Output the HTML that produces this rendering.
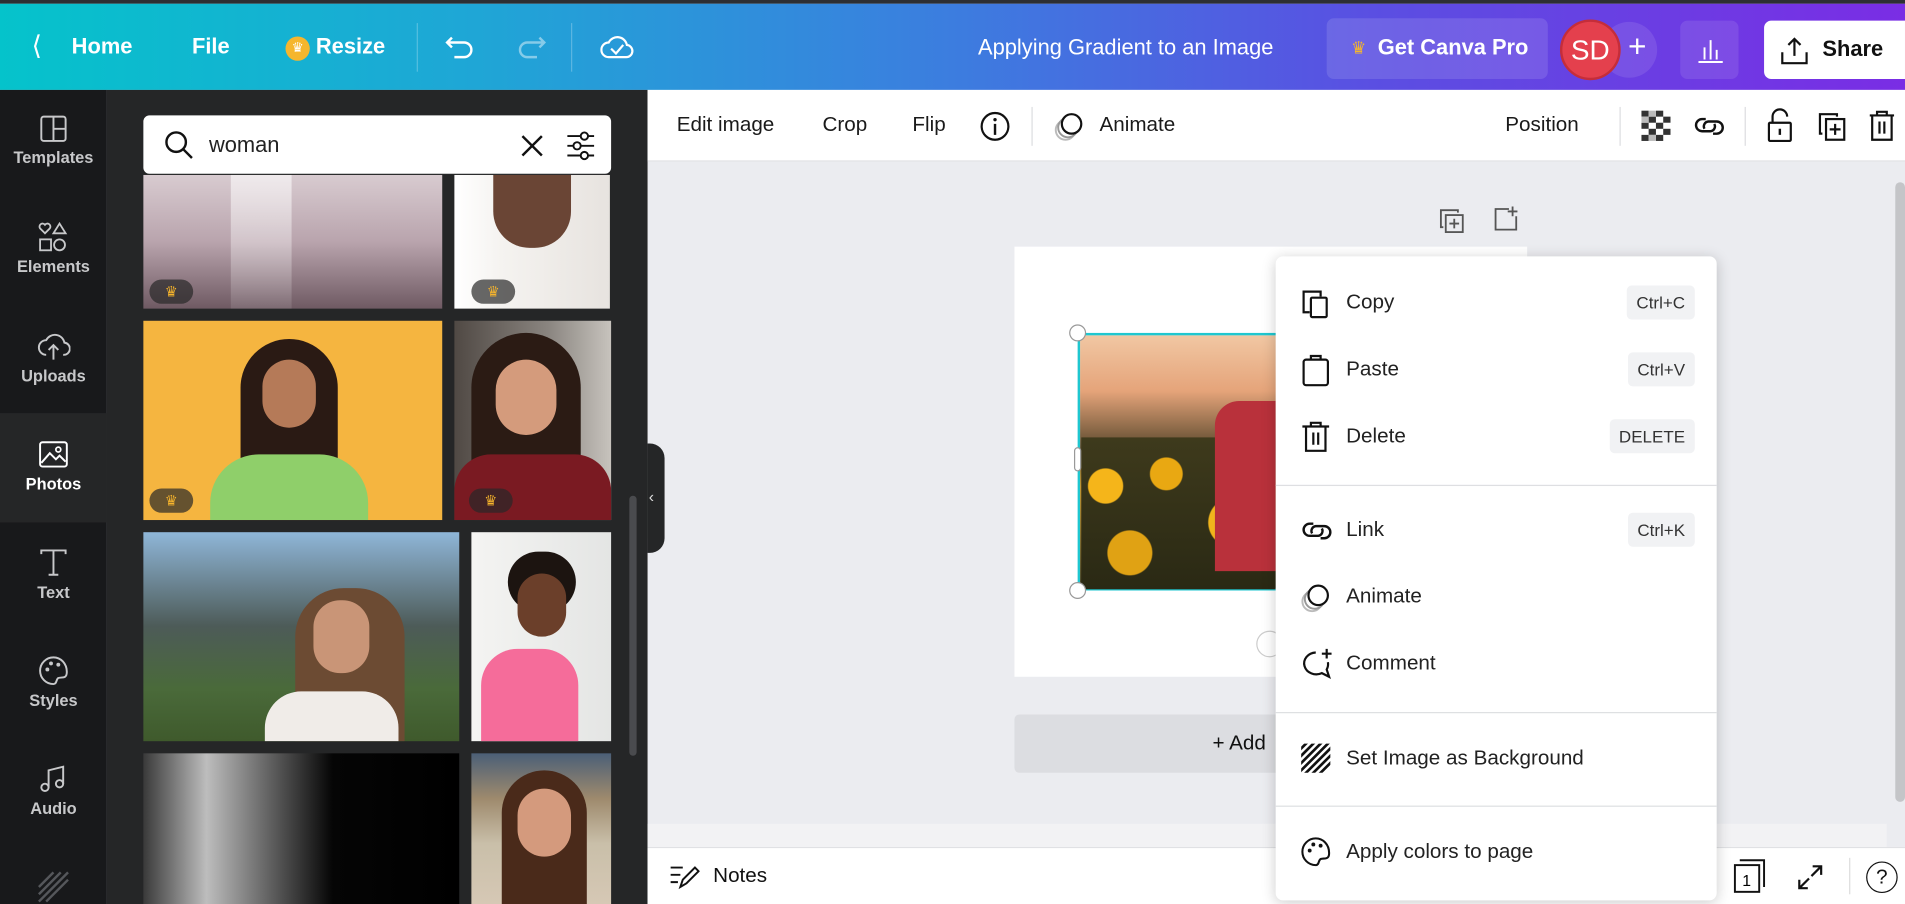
<!DOCTYPE html>
<html><head><meta charset="utf-8"><style>
*{box-sizing:border-box;margin:0;padding:0}
html,body{width:1905px;height:904px;overflow:hidden;background:#ebecf0;font-family:"Liberation Sans",sans-serif}
#r{position:absolute;left:0;top:0;width:1568px;height:744px;transform:scale(1.21492,1.21505);transform-origin:0 0}
.a{position:absolute}
.hd{left:0;top:0;width:1568px;height:74px;background:linear-gradient(90deg,#05c3cb 0%,#1fa6d6 25%,#3c7ddf 50%,#5a4fe2 72%,#7a2de4 100%);border-top:3px solid #2d2f33}
.w{color:#fff;font-size:18px;font-weight:bold}
.side{left:0;top:74px;width:88px;height:670px;background:#18191b}
.panel{left:88px;top:74px;width:445px;height:670px;background:#252627}
.si{position:absolute;left:0;width:88px;text-align:center;color:#c7c8ca;font-size:13.5px;font-weight:bold}
.si svg{display:block;margin:0 auto 4px}
.tb{left:533px;top:74px;width:1035px;height:59px;background:#fff;border-bottom:1px solid #e0e1e4}
.tt{font-size:17px;color:#1a1a1a}
.menu{left:1050px;top:211px;width:363px;height:530px;background:#fff;border-radius:6px;box-shadow:0 2px 12px rgba(0,0,0,.2)}
.mi{position:absolute;left:58px;font-size:17px;color:#222}
.ic{position:absolute;left:20px}
.k{position:absolute;right:18px;height:28px;line-height:28px;padding:0 8px;background:#f1f2f4;border-radius:4px;font-size:14px;color:#333}
.hr{position:absolute;left:0;width:363px;height:1px;background:#dedfe2}
.crown{position:absolute;width:36px;height:20px;border-radius:10px;background:rgba(40,40,40,.7);color:#f7b52c;font-size:12px;text-align:center;line-height:20px}
</style></head><body><div id="r">
<div class="a hd">
 <div class="a w" style="left:26px;top:22px;font-weight:normal;font-size:22px">&#10216;</div>
 <div class="a w" style="left:59px;top:25px">Home</div>
 <div class="a w" style="left:158px;top:25px">File</div>
 <div class="a" style="left:235px;top:27px;width:20px;height:20px;border-radius:50%;background:#f5b62d;color:#fff;font-size:11px;text-align:center;line-height:20px">&#9819;</div>
 <div class="a w" style="left:260px;top:25px">Resize</div>
 <div class="a" style="left:343px;top:16px;width:1px;height:40px;background:rgba(255,255,255,.25)"></div>
 <svg class="a" style="left:366px;top:26px" width="28" height="22" viewBox="0 0 28 22"><path d="M6 2 L2 6 L6 10 M2 6 H16 a6 6 0 0 1 0 12 H8" fill="none" stroke="#fff" stroke-width="2"/></svg>
 <svg class="a" style="left:424px;top:26px" width="28" height="22" viewBox="0 0 28 22"><path d="M20 2 L24 6 L20 10 M24 6 H10 a6 6 0 0 0 0 12 H18" fill="none" stroke="rgba(255,255,255,.45)" stroke-width="2"/></svg>
 <div class="a" style="left:470px;top:16px;width:1px;height:40px;background:rgba(255,255,255,.25)"></div>
 <svg class="a" style="left:494px;top:24px" width="28" height="24" viewBox="0 0 28 24"><path d="M7 20 a6 6 0 0 1 0-12 a8 8 0 0 1 15 2 a5 5 0 0 1-1 10 Z M9 13 l4 4 l6-7" fill="none" stroke="#fff" stroke-width="1.8"/></svg>
 <div class="a w" style="left:805px;top:26px;font-weight:normal;font-size:18px">Applying Gradient to an Image</div>
 <div class="a" style="left:1092px;top:12px;width:182px;height:50px;border-radius:6px;background:rgba(255,255,255,.12)"></div>
 <div class="a" style="left:1112px;top:28px;color:#f5b62d;font-size:14px">&#9819;</div>
 <div class="a w" style="left:1134px;top:26px">Get Canva Pro</div>
 <div class="a" style="left:1318px;top:15px;width:46px;height:46px;border-radius:50%;background:rgba(255,255,255,.1)"></div>
 <div class="a" style="left:1284px;top:13px;width:50px;height:50px;border-radius:50%;background:#e4404d;border:2px solid #c52d3a;color:#fff;font-size:23px;text-align:center;line-height:46px">SD</div>
 <div class="a w" style="left:1340px;top:20px;font-size:26px;font-weight:normal">+</div>
 <div class="a" style="left:1383px;top:14px;width:48px;height:48px;border-radius:6px;background:rgba(255,255,255,.1)"></div>
 <svg class="a" style="left:1396px;top:26px" width="24" height="24" viewBox="0 0 24 24"><path d="M2 22H22 M7 20V10 M12 20V4 M17 20V12" stroke="#fff" stroke-width="1.6"/></svg>
 <div class="a" style="left:1452px;top:14px;width:116px;height:48px;border-radius:6px 0 0 6px;background:#fff"></div>
 <svg class="a" style="left:1464px;top:26px" width="26" height="26" viewBox="0 0 26 26"><path d="M13 3V17 M8 8 L13 3 L18 8 M3 14V23H23V14" fill="none" stroke="#111" stroke-width="1.8"/></svg>
 <div class="a" style="left:1500px;top:27px;font-size:18px;font-weight:bold;color:#111">Share</div>
</div>
<div class="a side">
 <div class="a" style="left:0;top:266px;width:88px;height:90px;background:#252627"></div>
 <div class="si" style="top:20px"><svg width="24" height="24" viewBox="0 0 24 24"><rect x="2" y="2" width="20" height="20" rx="2" fill="none" stroke="#c7c8ca" stroke-width="1.6"/><path d="M12 2V22 M12 12H22" stroke="#c7c8ca" stroke-width="1.6"/></svg>Templates</div>
 <div class="si" style="top:108px"><svg width="26" height="26" viewBox="0 0 26 26"><path d="M6 10 L2 6 a2.5 2.5 0 0 1 4-3 a2.5 2.5 0 0 1 4 3Z M18 2 L23 10 H13Z" fill="none" stroke="#c7c8ca" stroke-width="1.5"/><rect x="2" y="15" width="9" height="9" fill="none" stroke="#c7c8ca" stroke-width="1.5"/><circle cx="18" cy="19.5" r="4.5" fill="none" stroke="#c7c8ca" stroke-width="1.5"/></svg>Elements</div>
 <div class="si" style="top:198px"><svg width="28" height="26" viewBox="0 0 28 26"><path d="M8 20 a6 6 0 0 1 0-12 a8 8 0 0 1 15 2 a5 5 0 0 1-1 10 M14 24V12 M10 16 L14 12 L18 16" fill="none" stroke="#c7c8ca" stroke-width="1.6"/></svg>Uploads</div>
 <div class="si" style="top:287px;color:#fff"><svg width="26" height="26" viewBox="0 0 26 26"><rect x="2" y="3" width="22" height="20" rx="2" fill="none" stroke="#fff" stroke-width="1.6"/><circle cx="17" cy="9" r="2" fill="none" stroke="#fff" stroke-width="1.4"/><path d="M3 20 L10 12 L15 17 L18 14 L23 19" fill="none" stroke="#fff" stroke-width="1.6"/></svg>Photos</div>
 <div class="si" style="top:376px"><svg width="26" height="26" viewBox="0 0 26 26"><path d="M3 6V3H23V6 M13 3V23 M9 23H17" fill="none" stroke="#c7c8ca" stroke-width="1.6"/></svg>Text</div>
 <div class="si" style="top:465px"><svg width="26" height="26" viewBox="0 0 26 26"><path d="M13 2 a11 11 0 1 0 0 22 c3 0 2-4 4-5 c3-1 7 1 7-5 C24 7 19 2 13 2Z" fill="none" stroke="#c7c8ca" stroke-width="1.6"/><circle cx="8" cy="12" r="1.6" fill="#c7c8ca"/><circle cx="11" cy="7" r="1.6" fill="#c7c8ca"/><circle cx="17" cy="8" r="1.6" fill="#c7c8ca"/></svg>Styles</div>
 <div class="si" style="top:554px"><svg width="26" height="26" viewBox="0 0 26 26"><path d="M9 20V6 L21 3V17" fill="none" stroke="#c7c8ca" stroke-width="1.6"/><circle cx="6" cy="20" r="3" fill="none" stroke="#c7c8ca" stroke-width="1.6"/><circle cx="18" cy="17" r="3" fill="none" stroke="#c7c8ca" stroke-width="1.6"/></svg>Audio</div>
 <svg class="a" style="left:30px;top:642px" width="28" height="28" viewBox="0 0 28 28"><path d="M2 14L14 2 M2 20L20 2 M2 26L26 2 M8 26L26 8" stroke="#55575b" stroke-width="2"/></svg>
</div>
<div class="a panel">
 <div class="a" style="left:30px;top:70px;width:246px;height:110px;background:linear-gradient(180deg,#d8cbd0 0%,#b9a4ad 50%,#6f5a63 100%)"></div>
 <div class="a" style="left:102px;top:70px;width:50px;height:110px;background:linear-gradient(180deg,rgba(255,255,255,.6),rgba(255,255,255,.1))"></div>
 <div class="crown" style="left:35px;top:156px">&#9819;</div>
 <div class="a" style="left:286px;top:70px;width:128px;height:110px;background:linear-gradient(90deg,#fff 0%,#f5f3f0 30%,#e7e3df 100%)"></div>
 <div class="a" style="left:318px;top:70px;width:64px;height:60px;background:#6a4535;border-radius:0 0 30px 30px"></div>
 <div class="crown" style="left:300px;top:156px">&#9819;</div>
 <div class="a" style="left:30px;top:190px;width:246px;height:164px;background:#f5b540"></div>
 <div class="a" style="left:110px;top:205px;width:80px;height:110px;border-radius:40px 40px 10px 10px;background:#2a1a14"></div>
 <div class="a" style="left:128px;top:222px;width:44px;height:56px;border-radius:22px;background:#b57a58"></div>
 <div class="a" style="left:85px;top:300px;width:130px;height:54px;border-radius:40px 40px 0 0;background:#8fcf6a"></div>
 <div class="crown" style="left:35px;top:328px">&#9819;</div>
 <div class="a" style="left:286px;top:190px;width:129px;height:164px;background:linear-gradient(90deg,#504944,#8a8580 60%,#c7c3bd)"></div>
 <div class="a" style="left:300px;top:200px;width:90px;height:130px;border-radius:45px 45px 10px 10px;background:#2b1b14"></div>
 <div class="a" style="left:320px;top:222px;width:50px;height:62px;border-radius:25px;background:#d49b7c"></div>
 <div class="a" style="left:286px;top:300px;width:129px;height:54px;background:#7a1a22;border-radius:30px 30px 0 0"></div>
 <div class="crown" style="left:298px;top:328px">&#9819;</div>
 <div class="a" style="left:30px;top:364px;width:260px;height:172px;background:linear-gradient(180deg,#8fb6d8 0%,#4d5b58 45%,#4a6a3a 75%,#3f5a2c 100%)"></div>
 <div class="a" style="left:155px;top:410px;width:90px;height:126px;border-radius:40px 40px 0 0;background:#6c4b33"></div>
 <div class="a" style="left:170px;top:420px;width:46px;height:60px;border-radius:22px;background:#c99577"></div>
 <div class="a" style="left:130px;top:495px;width:110px;height:41px;border-radius:30px 30px 0 0;background:#f0ece8"></div>
 <div class="a" style="left:300px;top:364px;width:115px;height:172px;background:linear-gradient(90deg,#f4f4f2,#e4e5e4)"></div>
 <div class="a" style="left:330px;top:380px;width:56px;height:50px;border-radius:28px;background:#1c1410"></div>
 <div class="a" style="left:338px;top:398px;width:40px;height:52px;border-radius:20px;background:#6b3f2a"></div>
 <div class="a" style="left:308px;top:460px;width:80px;height:76px;border-radius:30px 30px 0 0;background:#f56c9a"></div>
 <div class="a" style="left:30px;top:546px;width:260px;height:124px;background:linear-gradient(90deg,#3a3a3a,#bdbdbd 20%,#4a4a4a 45%,#050505 60%,#000)"></div>
 <div class="a" style="left:300px;top:546px;width:115px;height:124px;background:linear-gradient(180deg,#4b5f77 0%,#9e8a6d 30%,#c9bfa9 60%,#d6c8b5 100%)"></div>
 <div class="a" style="left:325px;top:560px;width:70px;height:110px;border-radius:35px 35px 0 0;background:#4a2a1a"></div>
 <div class="a" style="left:338px;top:575px;width:44px;height:56px;border-radius:22px;background:#d49a7d"></div>
 <div class="a" style="left:30px;top:21px;width:385px;height:48px;background:#fff;border-radius:5px"></div>
 <svg class="a" style="left:46px;top:32px" width="26" height="26" viewBox="0 0 26 26"><circle cx="11" cy="11" r="8" fill="none" stroke="#111" stroke-width="2"/><path d="M17 17 L24 24" stroke="#111" stroke-width="2"/></svg>
 <div class="a" style="left:84px;top:35px;font-size:18px;color:#222">woman</div>
 <svg class="a" style="left:340px;top:36px" width="20" height="20" viewBox="0 0 20 20"><path d="M2 2L18 18M18 2L2 18" stroke="#111" stroke-width="2"/></svg>
 <svg class="a" style="left:377px;top:33px" width="26" height="26" viewBox="0 0 26 26"><path d="M2 5H24M2 13H24M2 21H24" stroke="#111" stroke-width="1.6"/><circle cx="16" cy="5" r="3" fill="#fff" stroke="#111" stroke-width="1.6"/><circle cx="10" cy="13" r="3" fill="#fff" stroke="#111" stroke-width="1.6"/><circle cx="16" cy="21" r="3" fill="#fff" stroke="#111" stroke-width="1.6"/></svg>
 <div class="a" style="left:430px;top:334px;width:6px;height:214px;border-radius:3px;background:#4a4b4e"></div>
</div>
<div class="a" style="left:533px;top:365px;width:14px;height:90px;background:#252627;border-radius:0 12px 12px 0"></div>
<div class="a" style="left:534px;top:401px;color:#ddd;font-size:13px">&#8249;</div>
<div class="a tb">
 <div class="a tt" style="left:24px;top:19px">Edit image</div>
 <div class="a tt" style="left:144px;top:19px">Crop</div>
 <div class="a tt" style="left:218px;top:19px">Flip</div>
 <svg class="a" style="left:272px;top:16px" width="28" height="28" viewBox="0 0 28 28"><circle cx="14" cy="14" r="11" fill="none" stroke="#111" stroke-width="1.8"/><path d="M14 12V21" stroke="#111" stroke-width="2"/><circle cx="14" cy="8.5" r="1.4" fill="#111"/></svg>
 <div class="a" style="left:316px;top:14px;width:1px;height:32px;background:#dcdde0"></div>
 <svg class="a" style="left:334px;top:15px" width="28" height="30" viewBox="0 0 28 30"><circle cx="10" cy="18" r="8" fill="none" stroke="#bbb" stroke-width="1.6"/><circle cx="12" cy="16" r="8" fill="#fff" stroke="#999" stroke-width="1.6"/><circle cx="15" cy="13" r="8" fill="#fff" stroke="#111" stroke-width="1.8"/></svg>
 <div class="a tt" style="left:372px;top:19px">Animate</div>
 <div class="a tt" style="left:706px;top:19px">Position</div>
 <div class="a" style="left:800px;top:14px;width:1px;height:32px;background:#dcdde0"></div>
 <svg class="a" style="left:818px;top:17px" width="24" height="26" viewBox="0 0 24 26"><g fill="#333"><rect x="0" y="0" width="6" height="5"/><rect x="12" y="0" width="6" height="5"/><rect x="6" y="5" width="6" height="5"/><rect x="18" y="5" width="6" height="5"/><rect x="0" y="10" width="6" height="5"/><rect x="12" y="10" width="6" height="5"/><rect x="6" y="15" width="6" height="5"/><rect x="18" y="15" width="6" height="5"/><rect x="0" y="20" width="6" height="5"/><rect x="12" y="20" width="6" height="5"/></g><g fill="#bbb"><rect x="6" y="0" width="6" height="5"/><rect x="0" y="5" width="6" height="5"/><rect x="6" y="20" width="6" height="5"/></g></svg>
 <svg class="a" style="left:860px;top:18px" width="28" height="24" viewBox="0 0 28 24"><path d="M11 6H8a5 5 0 0 0 0 10h7a4 4 0 0 0 3-6 M17 18h3a5 5 0 0 0 0-10h-7a4 4 0 0 0-3 6" fill="none" stroke="#111" stroke-width="2"/></svg>
 <div class="a" style="left:903px;top:14px;width:1px;height:32px;background:#dcdde0"></div>
 <svg class="a" style="left:920px;top:14px" width="24" height="30" viewBox="0 0 24 30"><path d="M6 13V8a6 6 0 0 1 12 0" fill="none" stroke="#111" stroke-width="1.8"/><rect x="3" y="13" width="18" height="15" rx="1" fill="none" stroke="#111" stroke-width="1.8"/><path d="M12 18V23" stroke="#111" stroke-width="2"/></svg>
 <svg class="a" style="left:962px;top:16px" width="26" height="28" viewBox="0 0 26 28"><path d="M5 20H3V4H17V6" fill="none" stroke="#111" stroke-width="1.8"/><rect x="8" y="8" width="15" height="17" fill="none" stroke="#111" stroke-width="1.8"/><path d="M15.5 12V21M11 16.5H20" stroke="#111" stroke-width="1.8"/></svg>
 <svg class="a" style="left:1004px;top:15px" width="24" height="28" viewBox="0 0 24 28"><path d="M2 6H22M8 6V3H16V6M4 6V26H20V6M10 11V21M14 11V21" fill="none" stroke="#111" stroke-width="1.8"/></svg>
</div>
<svg class="a" style="left:1183px;top:170px" width="24" height="24" viewBox="0 0 24 24"><path d="M5 17H3V3H17V5" fill="none" stroke="#555" stroke-width="1.5"/><rect x="7" y="7" width="14" height="14" fill="none" stroke="#555" stroke-width="1.5"/><path d="M14 10V18M10 14H18" stroke="#555" stroke-width="1.5"/></svg>
<svg class="a" style="left:1228px;top:168px" width="24" height="24" viewBox="0 0 24 24"><path d="M14 4H3V21H20V10M17 2V10M13 6H21" fill="none" stroke="#555" stroke-width="1.5"/></svg>
<div class="a" style="left:835px;top:203px;width:422px;height:354px;background:#fff"></div>
<div class="a" style="left:887px;top:274px;width:200px;height:212px;background:linear-gradient(180deg,#f1c7a3 0%,#e5a47a 22%,#5c4a2e 45%,#c98c1c 60%,#3c3318 100%);border:2px solid #1fc7d0"></div>
<div class="a" style="left:890px;top:360px;width:160px;height:125px;background:radial-gradient(circle at 20px 40px,#f5b51a 14px,transparent 15px),radial-gradient(circle at 70px 30px,#e9a812 13px,transparent 14px),radial-gradient(circle at 125px 70px,#f0b41c 20px,transparent 21px),radial-gradient(circle at 40px 95px,#e0a214 18px,transparent 19px),linear-gradient(#3e3a1c,#2a2914)"></div>
<div class="a" style="left:1000px;top:330px;width:50px;height:140px;background:#b9313b;border-radius:20px 0 0 0"></div>
<div class="a" style="left:880px;top:267px;width:14px;height:14px;border-radius:50%;background:#fff;border:1px solid #999"></div>
<div class="a" style="left:880px;top:479px;width:14px;height:14px;border-radius:50%;background:#fff;border:1px solid #999"></div>
<div class="a" style="left:884px;top:368px;width:6px;height:20px;border-radius:3px;background:#fff;border:1px solid #999"></div>
<div class="a" style="left:1034px;top:519px;width:22px;height:22px;border-radius:50%;background:#fff;border:1px solid #ccc"></div>
<div class="a" style="left:835px;top:588px;width:300px;height:48px;background:#dcdde1;border-radius:4px"></div>
<div class="a" style="left:998px;top:602px;font-size:17px;color:#111">+ Add</div>
<div class="a" style="left:533px;top:697px;width:1035px;height:47px;background:#fff;border-top:1px solid #e0e1e4"></div>
<div class="a" style="left:533px;top:678px;width:1020px;height:19px;background:#f2f2f4"></div>
<svg class="a" style="left:550px;top:710px" width="26" height="24" viewBox="0 0 26 24"><path d="M2 4H12M2 10H10M2 16H8M10 20 L12 14 L22 4 L25 7 L15 17Z" fill="none" stroke="#111" stroke-width="1.6"/></svg>
<div class="a" style="left:587px;top:711px;font-size:17px;color:#111">Notes</div>
<svg class="a" style="left:1426px;top:706px" width="28" height="30" viewBox="0 0 28 30"><rect x="2" y="6" width="20" height="22" fill="none" stroke="#111" stroke-width="1.6"/><path d="M6 2H26V24" fill="none" stroke="#111" stroke-width="1.6"/><text x="8" y="23" font-size="13" font-family="Liberation Sans">1</text></svg>
<svg class="a" style="left:1478px;top:710px" width="24" height="24" viewBox="0 0 24 24"><path d="M14 3H21V10M21 3L13 11M10 21H3V14M3 21L11 13" fill="none" stroke="#111" stroke-width="1.8"/></svg>
<div class="a" style="left:1522px;top:706px;width:1px;height:30px;background:#ddd"></div>
<div class="a" style="left:1536px;top:709px;width:26px;height:26px;border-radius:50%;border:1.8px solid #111;text-align:center;font-size:17px;line-height:23px;color:#111">?</div>
<div class="a" style="left:1560px;top:150px;width:8px;height:510px;background:#c4c5c8;border-radius:4px"></div>
<div class="a menu">
 <svg class="ic" style="top:26px" width="26" height="26" viewBox="0 0 26 26"><path d="M8 20H3V3H17V7" fill="none" stroke="#111" stroke-width="1.8"/><rect x="9" y="8" width="13" height="16" rx="1" fill="none" stroke="#111" stroke-width="1.8"/></svg>
 <div class="mi" style="top:28px">Copy</div><div class="k" style="top:24px">Ctrl+C</div>
 <svg class="ic" style="top:80px" width="26" height="28" viewBox="0 0 26 28"><rect x="3" y="5" width="20" height="21" rx="2" fill="none" stroke="#111" stroke-width="1.8"/><path d="M9 5V2H17V5" fill="none" stroke="#111" stroke-width="1.8"/></svg>
 <div class="mi" style="top:83px">Paste</div><div class="k" style="top:79px">Ctrl+V</div>
 <svg class="ic" style="top:134px" width="26" height="28" viewBox="0 0 26 28"><path d="M2 6H24M9 6V3H17V6M5 6V26H21V6M11 11V21M15 11V21" fill="none" stroke="#111" stroke-width="1.8"/></svg>
 <div class="mi" style="top:138px">Delete</div><div class="k" style="top:134px">DELETE</div>
 <div class="hr" style="top:188px"></div>
 <svg class="ic" style="top:214px" width="28" height="24" viewBox="0 0 28 24"><path d="M11 6H8a5 5 0 0 0 0 10h7a4 4 0 0 0 3-6 M17 18h3a5 5 0 0 0 0-10h-7a4 4 0 0 0-3 6" fill="none" stroke="#111" stroke-width="2"/></svg>
 <div class="mi" style="top:215px">Link</div><div class="k" style="top:211px">Ctrl+K</div>
 <svg class="ic" style="top:266px" width="28" height="30" viewBox="0 0 28 30"><circle cx="10" cy="18" r="8" fill="none" stroke="#bbb" stroke-width="1.6"/><circle cx="12" cy="16" r="8" fill="#fff" stroke="#999" stroke-width="1.6"/><circle cx="15" cy="13" r="8" fill="#fff" stroke="#111" stroke-width="1.8"/></svg>
 <div class="mi" style="top:270px">Animate</div>
 <svg class="ic" style="top:322px" width="28" height="28" viewBox="0 0 28 28"><path d="M13 4 a10 9 0 1 0 5 17 L24 24 L22 18 a9 9 0 0 0 1-6" fill="none" stroke="#111" stroke-width="1.8"/><path d="M22 1V9M18 5H26" stroke="#111" stroke-width="1.8"/></svg>
 <div class="mi" style="top:325px">Comment</div>
 <div class="hr" style="top:375px"></div>
 <svg class="ic" style="top:400px" width="26" height="26" viewBox="0 0 26 26"><clipPath id="c"><rect x="1" y="1" width="24" height="24"/></clipPath><g clip-path="url(#c)" stroke="#111" stroke-width="2.2"><path d="M-5 11L11 -5M-5 17L17 -5M-5 23L23 -5M-5 29L29 -5M1 29L29 1M7 29L29 7M13 29L29 13"/></g></svg>
 <div class="mi" style="top:403px">Set Image as Background</div>
 <div class="hr" style="top:452px"></div>
 <svg class="ic" style="top:477px" width="26" height="26" viewBox="0 0 26 26"><path d="M13 2 a11 11 0 1 0 0 22 c3 0 2-4 4-5 c3-1 7 1 7-5 C24 7 19 2 13 2Z" fill="none" stroke="#111" stroke-width="1.7"/><circle cx="8" cy="12" r="1.6" fill="#111"/><circle cx="11" cy="7" r="1.6" fill="#111"/><circle cx="17" cy="8" r="1.6" fill="#111"/></svg>
 <div class="mi" style="top:480px">Apply colors to page</div>
</div>
</div></body></html>
